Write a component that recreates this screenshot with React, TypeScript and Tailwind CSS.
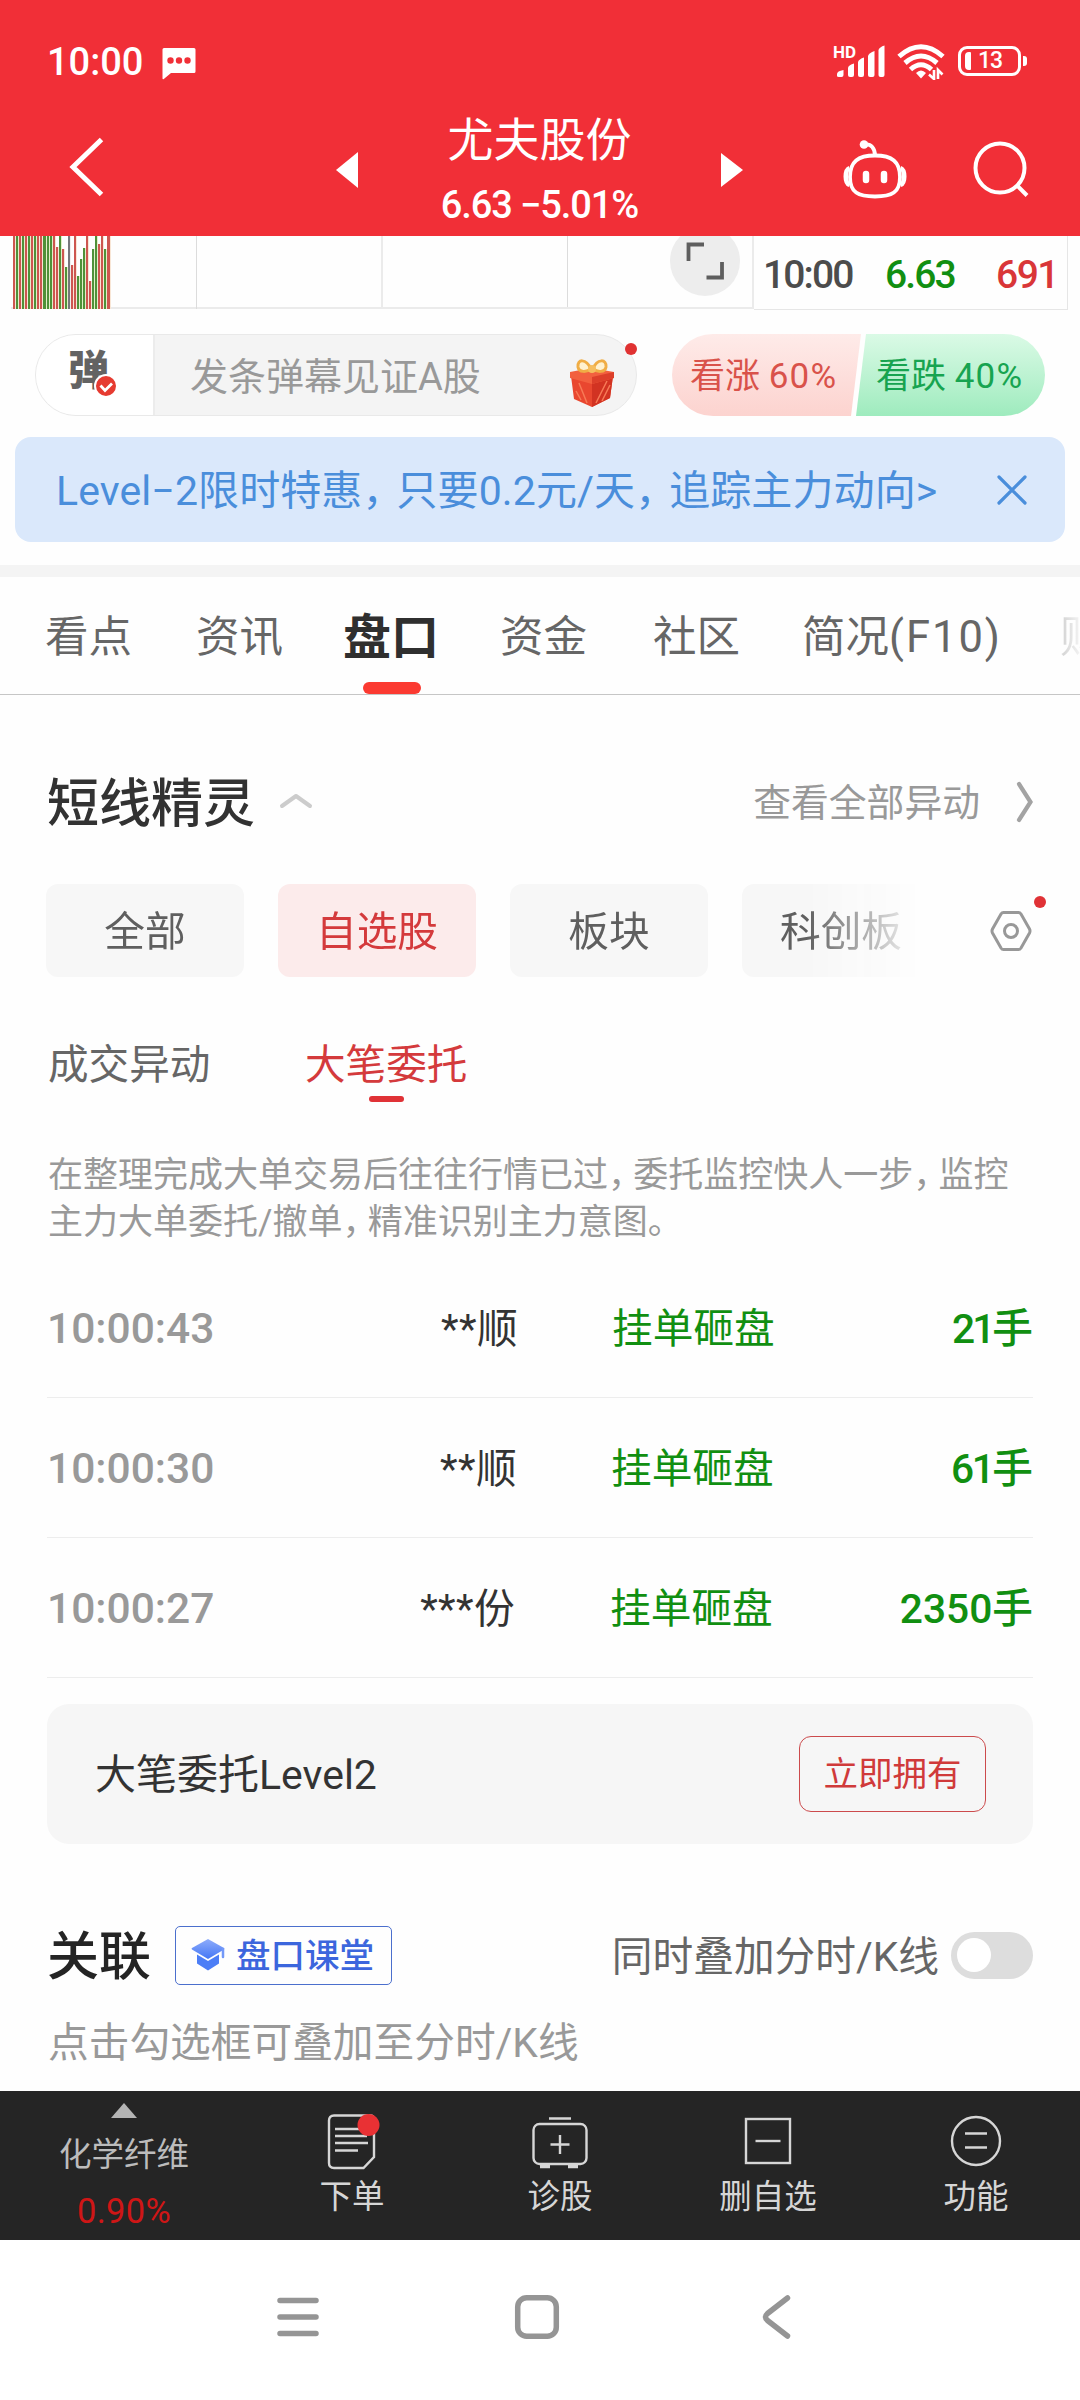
import type { ReactNode } from "react";

// [color, height] of every volume bar, r = up, g = down, n = flat
const VOLUMES: [string, number][] = [
  ["r", 73], ["g", 73], ["r", 73], ["g", 73], ["r", 73], ["g", 73], ["r", 73], ["g", 73],
  ["r", 73], ["r", 73], ["g", 73], ["g", 73], ["g", 73], ["r", 73], ["r", 62], ["g", 73],
  ["r", 60], ["g", 42], ["n", 73], ["r", 44], ["r", 73], ["g", 33], ["g", 50], ["g", 61],
  ["r", 73], ["r", 28], ["g", 60], ["g", 73], ["r", 65], ["r", 73], ["g", 60], ["r", 73],
];

const BAR_COLORS: Record<string, string> = {
  r: "bg-[#cd5650] border-[#f8e6d6]",
  g: "bg-[#4f9139] border-[#e2efc8]",
  n: "bg-[#77777b] border-[#eeeeee]",
};

const ORDERS = [
  { time: "10:00:43", name: "**顺", action: "挂单砸盘", volume: "21", nameW: "w-[471px]", gap: "ml-[94px]", tight: "tracking-[-3px]" },
  { time: "10:00:30", name: "**顺", action: "挂单砸盘", volume: "61", nameW: "w-[470px]", gap: "ml-[94px]", tight: "tracking-[-2.500px]" },
  { time: "10:00:27", name: "***份", action: "挂单砸盘", volume: "2350", nameW: "w-[468px]", gap: "ml-[95px]", tight: "tracking-normal" },
];

// Full-width comma set on a narrower advance
function Comma({ wide = false }: { wide?: boolean }) {
  return <span className={wide ? "tracking-[-0.17em]" : "tracking-[-0.28em]"}>，</span>;
}

function StatusBar() {
  return (
    <div className="flex h-[100px] items-start pl-[47px] pt-[43px]">
      <span className="w-[115px] text-[38px] font-medium leading-[38px]">10:00</span>
      <svg className="mt-[5px]" width="34" height="32" viewBox="0 0 34 32">
        <path d="M2 0h30a1.500 1.500 0 0 1 1.500 1.500v22a1.500 1.500 0 0 1-1.500 1.500H9L1.800 31q-1.300 1-1.300-.8V1.500A1.500 1.500 0 0 1 2 0z" fill="#fff" />
        <circle cx="8.500" cy="12.500" r="3.200" fill="#f12f37" />
        <circle cx="17" cy="12.500" r="3.200" fill="#f12f37" />
        <circle cx="25.500" cy="12.500" r="3.200" fill="#f12f37" />
      </svg>
      <div className="ml-auto mr-[53px] flex items-start">
        <div className="relative w-[63px]">
          <span className="absolute -top-[1px] -left-[1px] text-[17px] font-bold leading-[20px]">HD</span>
          <svg width="52" height="36" viewBox="0 0 52 36" fill="#fff">
            <path d="M3 34v-3q0-3 6.500-4v5q0 2-2 2H5q-2 0-2-1z" />
            <path d="M14 24.500q1-2.500 6-4V32q0 2-2 2h-2q-2 0-2-2z" />
            <path d="M24 19q1-3 6-4.500V32q0 2-2 2h-2q-2 0-2-2z" />
            <path d="M34 13q1-3 6.500-5v24q0 2-2 2H36q-2 0-2-2z" />
            <path d="M44.500 7q1-3 6-4.500V32q0 2-2 2h-2q-2 0-2-2z" />
          </svg>
        </div>
        <svg width="48" height="37" viewBox="0 0 48 37" fill="none" stroke="#fff" strokeWidth="5">
          <path d="M2 13.500Q24-6 46 13.500" />
          <path d="M8 20Q24 6 40 20" />
          <path d="M13.500 26.500Q24 17 34.500 26.500" />
          <path d="M19 30q5-5 10 0l-5 5.500z" fill="#fff" stroke="none" />
          <path d="M37 27v9l-5-4.500M41 36v-9l4.500 4.500" strokeWidth="2.600" />
        </svg>
        <div className="ml-[13px] mt-[3px] flex items-center">
          <div className="flex h-[30px] w-[63px] items-center rounded-[9px] border-[3px] border-white pl-[4px]">
            <div className="h-[18px] w-[6px] rounded-l-[4px] rounded-r-[1px] bg-white" />
            <span className="ml-[7px] text-[23px] font-medium leading-[24px] tracking-[-1px]">13</span>
          </div>
          <div className="ml-[2px] h-[10px] w-[4px] rounded-r-[3px] bg-white" />
        </div>
      </div>
    </div>
  );
}

function Header() {
  return (
    <header className="h-[236px] bg-[#f12f37] text-white">
      <StatusBar />
      <div className="flex h-[136px] items-start">
        <svg className="ml-[68px] mt-[36px]" width="40" height="62" viewBox="0 0 40 62" fill="none" stroke="#fff" strokeWidth="5">
          <path d="M33.500 3.500L5 31l28.500 27.500" />
        </svg>
        <svg className="ml-[228px] mt-[52px]" width="22" height="36" viewBox="0 0 22 36">
          <path d="M0 18L22 0v36z" fill="#fff" />
        </svg>
        <div className="flex w-[363px] flex-col items-center pt-[12px]">
          <h1 className="text-[46px] leading-[56px]">尤夫股份</h1>
          <div className="mt-[15px] whitespace-pre text-[38px] font-medium leading-[44px] tracking-[-1.100px]">6.63 −5.01%</div>
        </div>
        <svg className="mt-[53px]" width="22" height="34" viewBox="0 0 22 34">
          <path d="M22 17L0 0v34z" fill="#fff" />
        </svg>
        <svg className="ml-[99px] mt-[38px]" width="66" height="62" viewBox="0 0 66 62" fill="none" stroke="#fff" strokeWidth="3.800">
          <path d="M33 17.500c17 0 25 6 25 21.500S50 58.500 33 58.500 8 54.500 8 39s8-21.500 25-21.500z" />
          <path d="M7.500 30C2.500 32 2.500 45 7.500 47M58.500 30c5 2 5 15 0 17" strokeWidth="4.500" />
          <path d="M23 6.500c6-1 10 4 10 11" />
          <circle cx="22" cy="6.500" r="4.300" fill="#fff" stroke="none" />
          <path d="M24 36v6M42 36v6" strokeWidth="6.500" strokeLinecap="round" />
        </svg>
        <svg className="ml-[64px] mt-[40px]" width="60" height="60" viewBox="0 0 60 60" fill="none" stroke="#fff" strokeWidth="4">
          <circle cx="28" cy="28" r="24.500" />
          <path d="M45 45.500L55 55.500" />
        </svg>
      </div>
    </header>
  );
}

function ChartStrip() {
  return (
    <div className="flex h-[74px] pl-[11px]">
      <div className="flex h-[73px] border-b-2 border-[#ebebeb]">
        <div className="-mb-[2px] flex w-[186px] items-end border-r border-[#dcdcdc] pl-[2px]">
          {VOLUMES.map(([kind, height], i) => (
            <div key={i} className={`w-[3.050px] border-r ${BAR_COLORS[kind]}`} style={{ height }} />
          ))}
        </div>
        <div className="w-[186px] border-r-2 border-[#ebebeb]" />
        <div className="w-[185px] border-r border-[#dcdcdc]" />
        <div className="w-[186px] overflow-hidden border-r-2 border-[#ebebeb] pl-[102px]">
          <div className="-mt-[10px] flex size-[70px] items-center justify-center rounded-full bg-[#ededed]">
            <svg width="38" height="38" viewBox="0 0 38 38" fill="none" stroke="#5e5e5e" strokeWidth="3.800">
              <path d="M2.500 19V2.500H18M20.500 35.500H36V20" />
            </svg>
          </div>
        </div>
      </div>
      <div className="flex w-[314px] items-center border-b border-r border-[#e6e6e6] pl-[9px] pr-[9px] pt-[4px] text-[39px] font-medium leading-[44px]">
        <span className="w-[122px] tracking-[-1.900px] text-[#4c4c4c]">10:00</span>
        <span className="text-[#118f11] tracking-[-1.900px]">6.63</span>
        <span className="ml-auto text-[#d93638] tracking-[-1.500px]">691</span>
      </div>
    </div>
  );
}

function Gift() {
  return (
    <svg width="46" height="49" viewBox="0 0 46 49">
      <path d="M2 17l21 6 21-6-3 22-18 9-18-8z" fill="#e9472f" />
      <path d="M23 23l21-6-3 22-18 9z" fill="#d23322" />
      <path d="M27 44l11-22M33 42l8-16M10 24l8 20M7 32l5 9" stroke="#f77a56" strokeWidth="1.500" />
      <path d="M1 13l21-4 23 4v6l-22 6-22-6z" fill="#f2603f" />
      <path d="M23 18l22-5v6l-22 6z" fill="#dc3f2a" />
      <path d="M22 10C17-1 8 0 9 8c1 6 9 5 13 2zM24 10C28-1 38 0 37 8c-1 6-9 5-13 2z" fill="#fff1cf" stroke="#f0ad45" strokeWidth="3" />
      <circle cx="23" cy="10" r="4" fill="#f5bd5e" />
    </svg>
  );
}

function BarrageRow() {
  return (
    <div className="mt-[24px] flex h-[82px] pl-[35px]">
      <div className="relative flex w-[602px] rounded-full border border-[#e9e9e9] bg-[#f4f4f4]">
        <div className="relative w-[119px] rounded-l-full border-r-2 border-[#ececec] bg-white pl-[32px] pt-[11px]">
          <span className="text-[41px] font-black leading-[50px] text-[#636363]">弹</span>
          <svg className="absolute left-[58px] top-[39px]" width="24" height="24" viewBox="0 0 24 24">
            <circle cx="12" cy="12" r="11" fill="#e63b31" stroke="#fff" strokeWidth="2" />
            <path d="M6.500 11.500l4.500 5 7-7" fill="none" stroke="#fff" strokeWidth="2.800" />
          </svg>
        </div>
        <span className="pl-[35px] pt-[14px] text-[38px] leading-[56px] text-[#999]">发条弹幕见证A股</span>
        <div className="ml-auto mr-[21px] mt-[24px]">
          <Gift />
        </div>
        <div className="absolute -right-[1px] top-[8px] size-[12px] rounded-full bg-[#e03232]" />
      </div>
      <div className="ml-[35px] flex text-[35px] leading-[85px]">
        <div className="w-[189px] rounded-l-full bg-gradient-to-b from-[#feebe9] to-[#fcd3cf] pl-[18px] text-[#d9524a] [clip-path:polygon(0_0,100%_0,179px_100%,0_100%)]">
          看涨 <span className="tracking-[1.200px]">60%</span>
        </div>
        <div className="-ml-[5px] w-[189px] rounded-r-full bg-gradient-to-b from-[#dafae6] to-[#9eebbe] pl-[20px] text-[#17a450] [clip-path:polygon(10px_0,100%_0,100%_100%,0_100%)]">
          看跌 <span className="tracking-[1.200px]">40%</span>
        </div>
      </div>
    </div>
  );
}

function Banner() {
  return (
    <div className="mx-[15px] mt-[21px] flex h-[105px] items-center justify-between rounded-[16px] bg-[#dae8fb] pl-[41px] pr-[37px] text-[#4a8edb]">
      <span className="pt-[2px] text-[41px] leading-[50px] whitespace-nowrap tracking-[0.100px]">
        Level−2限时特惠<Comma wide />只要0.2元/天<Comma wide />追踪主力动向&gt;
      </span>
      <svg width="32" height="32" viewBox="0 0 32 32" stroke="currentColor" strokeWidth="3.200" strokeLinecap="round">
        <path d="M3 3l26 26M29 3L3 29" />
      </svg>
    </div>
  );
}

function Tabs() {
  return (
    <nav className="flex h-[118px] overflow-hidden whitespace-nowrap border-b border-[#c6c6c6] pl-[45px] text-[43.500px] leading-[121px] text-[#666]">
      <span className="w-[151px] shrink-0">看点</span>
      <span className="w-[147px] shrink-0">资讯</span>
      <div className="relative w-[157px] shrink-0 text-[48px] font-bold text-[#2f2f2f]">
        盘口
        <div className="absolute left-[20px] bottom-0 h-[12px] w-[58px] rounded-full bg-[#fb3a31]" />
      </div>
      <span className="w-[153px] shrink-0">资金</span>
      <span className="w-[149px] shrink-0">社区</span>
      <span className="w-[258px] shrink-0">简况<span className="tracking-[2px]">(F10)</span></span>
      <span className="shrink-0 bg-gradient-to-r from-[#d8d8d8] from-10% to-[#ffffff] to-60% bg-clip-text text-transparent">财</span>
    </nav>
  );
}

function Chip({ children, active = false }: { children: ReactNode; active?: boolean }) {
  return (
    <div
      className={
        active
          ? "w-[198px] shrink-0 rounded-[12px] bg-[#fcebeb] text-center text-[#d43a3c]"
          : "w-[198px] shrink-0 rounded-[12px] bg-[#f7f7f7] text-center text-[#5f5f5f]"
      }
    >
      {children}
    </div>
  );
}

function ShortTermSection() {
  return (
    <section className="px-[47px]">
      <div className="flex h-[64px] mt-[76px] items-center">
        <h2 className="pt-[4px] text-[52px] font-medium leading-[64px] text-[#323232]">短线精灵</h2>
        <svg className="-mt-[4px] ml-[22px]" width="38" height="18" viewBox="0 0 38 18" fill="none" stroke="#ccc" strokeWidth="4" strokeLinecap="round" strokeLinejoin="round">
          <path d="M5 14l14-10 14 10" />
        </svg>
        <span className="ml-auto text-[37.800px] leading-[60px] text-[#999]">查看全部异动</span>
        <svg className="-mt-[3px] -mr-[3px] ml-[34px]" width="22" height="44" viewBox="0 0 22 44" fill="none" stroke="#a3a3a3" strokeWidth="4.200" strokeLinecap="round">
          <path d="M5 4l11.500 18L5 40" />
        </svg>
      </div>

      <div className="mt-[49px] -ml-[1px] flex h-[93px] text-[40.700px] leading-[96px]">
        <div className="flex w-[884px] gap-[34px] overflow-hidden [mask-image:linear-gradient(to_right,#000_760px,transparent_876px)]">
          <Chip>全部</Chip>
          <Chip active>自选股</Chip>
          <Chip>板块</Chip>
          <Chip>科创板</Chip>
        </div>
        <div className="relative ml-[60px] mt-[26px]">
          <svg width="42" height="42" viewBox="0 0 42 42" fill="none" stroke="#989898" strokeWidth="3">
            <path d="M13.500 2.500h15q1.500 0 2.500 1.500l8.500 15q1 2 0 4L31 38q-1 1.500-2.500 1.500h-15q-1.500 0-2.500-1.500L2.500 23q-1-2 0-4L11 4q1-1.500 2.500-1.500z" />
            <circle cx="21" cy="21" r="6.500" />
          </svg>
          <div className="absolute left-[44px] -top-[14px] size-[12px] rounded-full bg-[#e03236]" />
        </div>
      </div>

      <div className="mt-[58px] flex h-[70px] text-[40.600px] leading-[60px] text-[#666]">
        <span className="ml-[1px] w-[257px]">成交异动</span>
        <div className="text-[#d43a3c]">
          大笔委托
          <div className="mx-auto mt-[1px] h-[6px] w-[35px] rounded-full bg-[#e03236]" />
        </div>
      </div>

      <p className="mt-[47px] ml-[1px] w-[985px] text-[35px] leading-[47px] text-[#999]">
        在整理完成大单交易后往往行情已过<Comma />委托监控快人一步<Comma />监控
        <br />
        主力大单委托/撤单<Comma />精准识别主力意图。
      </p>

      <div className="mt-[12px]">
        {ORDERS.map((order) => (
          <div key={order.time} className="flex h-[140px] border-b border-[#ededed] text-[40.700px] leading-[142px]">
            <div className={`flex justify-between ${order.nameW}`}>
              <span className="text-[42.500px] font-medium text-[#999]">{order.time}</span>
              <span className="text-[#333] tracking-[0.400px]">{order.name}</span>
            </div>
            <span className={`text-[#118f11] ${order.gap}`}>{order.action}</span>
            <span className="ml-auto font-medium text-[#118f11]">
              <span className={order.tight}>{order.volume}</span>手
            </span>
          </div>
        ))}
      </div>

      <div className="mt-[26px] flex h-[140px] items-center justify-between rounded-[22px] bg-[#f6f6f6] pl-[48px] pr-[47px]">
        <span className="pt-[2px] text-[41px] leading-[60px] text-[#333]">大笔委托Level2</span>
        <button className="h-[76px] w-[187px] rounded-[12px] border-[1.500px] border-[#cc4a4c] text-[34.500px] leading-[75px] text-[#d03a3a]">立即拥有</button>
      </div>
    </section>
  );
}

function RelatedSection() {
  return (
    <section className="mt-[78px] px-[47px]">
      <div className="flex h-[66px] items-center">
        <h2 className="w-[128px] pt-[6px] text-[52px] font-medium leading-[66px] text-[#242424]">关联</h2>
        <div className="flex h-[59px] w-[217px] items-center rounded-[5px] border-[1.500px] border-[#4b6fcd] pl-[15px]">
          <svg width="34" height="32" viewBox="0 0 34 32">
            <defs>
              <linearGradient id="cap" x1="0" y1="0" x2="0" y2="1">
                <stop offset="0" stopColor="#8eacfb" />
                <stop offset="1" stopColor="#4477f5" />
              </linearGradient>
            </defs>
            <path d="M17 0l16 9q1 .7 0 1.500L17 20 1 10.500Q0 9.700 1 9z" fill="url(#cap)" />
            <path d="M6 15.500L17 22l11-6.500v9L17 31.500 6 24.500z" fill="#4c7ef6" />
            <path d="M32 10v8" stroke="#7399f8" strokeWidth="2.500" strokeLinecap="round" />
          </svg>
          <span className="ml-[11px] pt-[1px] text-[34.500px] font-medium leading-[50px] text-[#3c66dd]">盘口课堂</span>
        </div>
        <span className="ml-auto pt-[3px] text-[40.700px] leading-[60px] text-[#666]">同时叠加分时/K线</span>
        <div className="ml-[12px] flex h-[47px] w-[82px] items-center rounded-full bg-[#ddd] pl-[6px]">
          <div className="size-[34px] rounded-full bg-white" />
        </div>
      </div>
      <p className="mt-[25px] ml-[1px] text-[40.700px] leading-[60px] text-[#999]">点击勾选框可叠加至分时/K线</p>
    </section>
  );
}

function ToolItem({ label, children }: { label: string; children: ReactNode }) {
  return (
    <div className="flex w-[208px] flex-col items-center pt-[21px]">
      <svg width="60" height="58" viewBox="0 0 60 58" fill="none" stroke="#d6d6d6" strokeWidth="2.400">
        {children}
      </svg>
      <span className="mt-[6px] text-[32.500px] leading-[42px] text-[#d6d6d6]">{label}</span>
    </div>
  );
}

function Toolbar() {
  return (
    <div className="flex h-[149px] bg-[#252525]">
      <div className="flex w-[248px] flex-col items-center pt-[12px]">
        <svg width="26" height="15" viewBox="0 0 26 15">
          <path d="M13 0l13 15H0z" fill="#b4b4b4" />
        </svg>
        <span className="mt-[16px] text-[32.500px] leading-[42px] text-[#bcbcbc]">化学纤维</span>
        <span className="mt-[14px] text-[34.500px] leading-[42px] tracking-[0.300px] text-[#cf1616]">0.90%</span>
      </div>
      <ToolItem label="下单">
        <path d="M12 3.500h36q4 0 4 4V45L41.500 56H12q-5 0-5-5V8.500q0-5 5-5z" />
        <path d="M13 17h32M13 24h32M13 31h33M13 38.500h23" />
        <circle cx="46.500" cy="13" r="11" fill="#e93134" stroke="none" />
      </ToolItem>
      <ToolItem label="诊股">
        <rect x="3.500" y="12" width="53" height="40" rx="6" />
        <path d="M19 6.500h22M30 23v19M20.500 32.500h19" />
        <path d="M10 54.500h10M38 54.500h10" strokeWidth="3.500" />
      </ToolItem>
      <ToolItem label="删自选">
        <rect x="8" y="7" width="44" height="44" />
        <path d="M17.500 29h25" />
      </ToolItem>
      <ToolItem label="功能">
        <circle cx="30" cy="29" r="24" />
        <path d="M19 21.500h22M19 35.500h22" />
      </ToolItem>
    </div>
  );
}

function SystemNav() {
  return (
    <div className="flex h-[160px] items-start bg-white pt-[53px]">
      <svg className="ml-[275px]" width="46" height="48" viewBox="0 0 46 48" stroke="#959595" strokeWidth="5.500" strokeLinecap="round">
        <path d="M5 7.500h36M5 24h36M5 40.500h36" />
      </svg>
      <svg className="ml-[192px]" width="48" height="48" viewBox="0 0 48 48" fill="none" stroke="#959595" strokeWidth="5.500">
        <rect x="4.700" y="4.700" width="38.600" height="38.600" rx="9" />
      </svg>
      <svg className="ml-[200px]" width="34" height="48" viewBox="0 0 34 48" fill="none" stroke="#959595" strokeWidth="5.500" strokeLinecap="round" strokeLinejoin="round">
        <path d="M26.500 5L6.500 20.500q-4 3.500 0 7L26.500 43" />
      </svg>
    </div>
  );
}

export default function App() {
  return (
    <div className="flex h-[2400px] w-[1080px] flex-col overflow-hidden bg-[#fefefe] font-[Roboto,'Noto_Sans_CJK_SC',sans-serif]">
      <Header />
      <main className="h-[1855px] overflow-hidden">
        <ChartStrip />
        <BarrageRow />
        <Banner />
        <div className="mt-[23px] h-[12px] bg-[#f4f4f4]" />
        <Tabs />
        <ShortTermSection />
        <RelatedSection />
      </main>
      <Toolbar />
      <SystemNav />
    </div>
  );
}
